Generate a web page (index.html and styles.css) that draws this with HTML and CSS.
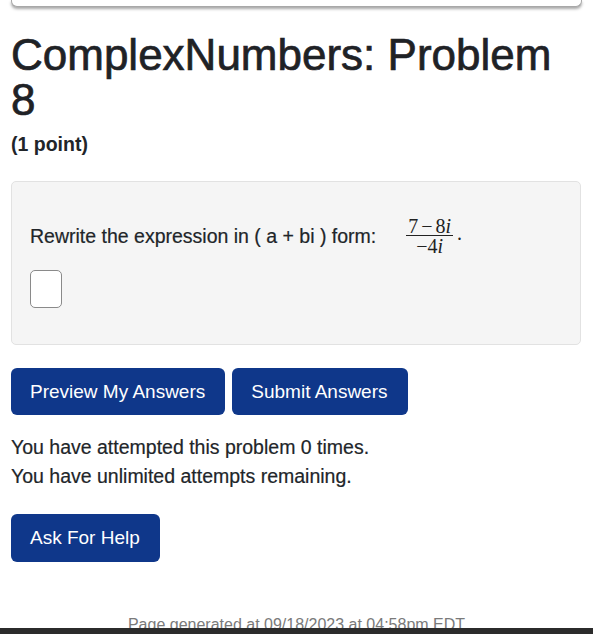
FILE: index.html
```html
<!DOCTYPE html>
<html lang="en">
<head>
<meta charset="utf-8">
<title>ComplexNumbers: Problem 8</title>
<link rel="stylesheet" href="styles.css">
</head>
<body>
<div class="topcard"></div>
<h1 class="title">ComplexNumbers: Problem 8</h1>
<p class="points">(1 point)</p>
<div class="problem">
  <div class="prompt">
    <span class="prompt-text">Rewrite the expression in ( a + bi ) form:</span>
    <span class="math">
      <span class="frac">
        <span class="num">7<span class="bin">−</span>8<i>i</i></span>
        <span class="den">−4<i>i</i></span>
      </span>
      <span class="period">.</span>
    </span>
  </div>
  <div class="answer"></div>
</div>
<div class="actions">
  <button class="btn">Preview My Answers</button>
  <button class="btn">Submit Answers</button>
</div>
<p class="attempts">You have attempted this problem 0 times.<br>You have unlimited attempts remaining.</p>
<button class="btn help">Ask For Help</button>
<p class="footer">Page generated at 09/18/2023 at 04:58pm EDT</p>
<div class="bottombar"></div>
</body>
</html>
```
FILE: styles.css
```css
html, body {
  margin: 0;
  padding: 0;
  background: #ffffff;
}
body {
  padding: 0 11px;
  font-family: "Liberation Sans", Arial, sans-serif;
  color: #212529;
  overflow: hidden;
}
.topcard {
  height: 6px;
  border: 1px solid #a8a8a8;
  border-top: none;
  border-radius: 0 0 6px 6px;
  background: #fff;
  box-shadow: 0 2px 3px rgba(0, 0, 0, 0.35);
}
.title {
  margin: 25px 0 0;
  font-size: 44px;
  line-height: 45px;
  font-weight: 400;
  color: #1f2226;
  -webkit-text-stroke: 0.7px #1f2226;
}
.points {
  margin: 10px 0 0;
  font-size: 19.5px;
  line-height: 24px;
  font-weight: 700;
}
.problem {
  margin-top: 25px;
  margin-right: 1px;
  background: #f5f5f5;
  border: 1px solid #e2e2e2;
  border-radius: 5px;
  padding: 36px 17px 36px 18px;
}
.prompt {
  display: flex;
  align-items: center;
  height: 35px;
}
.prompt-text {
  font-size: 19.5px;
  line-height: 24px;
  -webkit-text-stroke: 0.2px #212529;
}
.math {
  display: inline-flex;
  align-items: center;
  margin-left: 30px;
  font-family: "Liberation Serif", "Times New Roman", serif;
  font-size: 20px;
  color: #222;
}
.frac {
  display: inline-flex;
  flex-direction: column;
  align-items: center;
}
.num {
  display: block;
  line-height: 16px;
  padding: 0 2px 1px;
  border-bottom: 1.5px solid #222;
}
.den {
  display: block;
  line-height: 16px;
  padding-top: 2px;
}
.bin {
  margin: 0 3px;
}
.period {
  line-height: 19px;
  margin-left: 4px;
  margin-bottom: 4px;
}
.answer {
  margin-top: 17px;
  width: 30px;
  height: 36px;
  border: 1px solid #8a8a8a;
  border-radius: 5px;
  background: #fff;
}
.actions {
  display: flex;
  gap: 7px;
  margin-top: 23px;
}
.btn {
  display: inline-flex;
  align-items: center;
  justify-content: center;
  height: 47px;
  padding: 0 20px 0 19px;
  border: none;
  border-radius: 6px;
  background: #0f378a;
  color: #ffffff;
  font-family: "Liberation Sans", Arial, sans-serif;
  font-size: 19px;
}
.attempts {
  margin: 18px 0 0;
  font-size: 19.5px;
  line-height: 29px;
  -webkit-text-stroke: 0.2px #212529;
}
.help {
  margin-top: 23px;
  height: 48px;
}
.footer {
  margin: 53px 0 0;
  text-align: center;
  font-size: 16px;
  line-height: 20px;
  color: #7a7a7a;
}
.bottombar {
  position: fixed;
  left: 0;
  right: 0;
  bottom: 0;
  height: 6px;
  background: #2b2b2b;
}
```
